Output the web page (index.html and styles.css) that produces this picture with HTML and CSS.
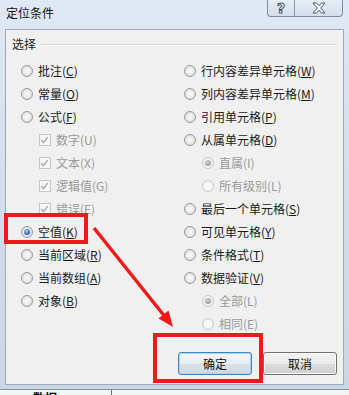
FILE: index.html
```html
<!DOCTYPE html>
<html lang="zh">
<head>
    <meta charset="UTF-8">
    <meta name="viewport" content="width=device-width, initial-scale=1.0">
    <title>定位条件</title>
    <link rel="stylesheet" href="styles.css">
</head>
<body>
    <div class="title-bar">
        <span class="title">定位条件</span>
        <div class="title-buttons">
            <span class="tb-help">?</span>
            <span class="tb-close">
                <svg width="14" height="12" viewBox="0 0 14 12">
                    <polygon points="1,1 4.5,1 7,3.8 9.5,1 13,1 8.8,6 13,11 9.5,11 7,8.2 4.5,11 1,11 5.2,6" fill="#fff" stroke="#4b5769" stroke-width="1"/>
                </svg>
            </span>
        </div>
    </div>

    <div class="client">
        <div class="group-head">
            <span>选择</span>
            <i class="group-line"></i>
        </div>

        <div class="options">
            <div class="col col-left">
                <div class="opt"><span class="radio"></span>批注(<u>C</u>)</div>
                <div class="opt"><span class="radio"></span>常量(<u>O</u>)</div>
                <div class="opt"><span class="radio"></span>公式(<u>F</u>)</div>
                <div class="opt sub off"><span class="check"><svg width="12" height="12" viewBox="0 0 12 12"><polyline points="2.5,6.2 5,8.8 9.5,2.8" fill="none" stroke="#a3a3a3" stroke-width="1.4"/></svg></span>数字(U)</div>
                <div class="opt sub off"><span class="check"><svg width="12" height="12" viewBox="0 0 12 12"><polyline points="2.5,6.2 5,8.8 9.5,2.8" fill="none" stroke="#a3a3a3" stroke-width="1.4"/></svg></span>文本(X)</div>
                <div class="opt sub off"><span class="check"><svg width="12" height="12" viewBox="0 0 12 12"><polyline points="2.5,6.2 5,8.8 9.5,2.8" fill="none" stroke="#a3a3a3" stroke-width="1.4"/></svg></span>逻辑值(G)</div>
                <div class="opt sub off"><span class="check"><svg width="12" height="12" viewBox="0 0 12 12"><polyline points="2.5,6.2 5,8.8 9.5,2.8" fill="none" stroke="#a3a3a3" stroke-width="1.4"/></svg></span>错误(E)</div>
                <div class="opt"><span class="radio on"></span>空值(<u>K</u>)</div>
                <div class="opt"><span class="radio"></span>当前区域(<u>R</u>)</div>
                <div class="opt"><span class="radio"></span>当前数组(<u>A</u>)</div>
                <div class="opt"><span class="radio"></span>对象(<u>B</u>)</div>
            </div>
            <div class="col col-right">
                <div class="opt"><span class="radio"></span>行内容差异单元格(<u>W</u>)</div>
                <div class="opt"><span class="radio"></span>列内容差异单元格(<u>M</u>)</div>
                <div class="opt"><span class="radio"></span>引用单元格(<u>P</u>)</div>
                <div class="opt"><span class="radio"></span>从属单元格(<u>D</u>)</div>
                <div class="opt sub off"><span class="radio on"></span>直属(I)</div>
                <div class="opt sub off"><span class="radio"></span>所有级别(L)</div>
                <div class="opt"><span class="radio"></span>最后一个单元格(<u>S</u>)</div>
                <div class="opt"><span class="radio"></span>可见单元格(<u>Y</u>)</div>
                <div class="opt"><span class="radio"></span>条件格式(<u>T</u>)</div>
                <div class="opt"><span class="radio"></span>数据验证(<u>V</u>)</div>
                <div class="opt sub off"><span class="radio on"></span>全部(L)</div>
                <div class="opt sub off"><span class="radio"></span>相同(E)</div>
            </div>
        </div>

        <div class="buttons">
            <button class="btn btn-default">确定</button>
            <button class="btn">取消</button>
        </div>
    </div>

    <div class="sheet">
        <span class="sheet-cell">数据</span>
    </div>

    <!-- 红色标注 -->
    <div class="mark mark-blank"></div>
    <div class="mark mark-ok"></div>
    <svg class="arrow" width="349" height="395" viewBox="0 0 349 395">
        <line x1="94" y1="228" x2="166" y2="318" stroke="#f01818" stroke-width="3.5"/>
        <polygon points="173,327 168.5,310.5 158.5,318.5" fill="#f01818"/>
    </svg>
</body>
</html>
```

FILE: styles.css
```css
* {
    margin: 0;
    padding: 0;
    box-sizing: border-box;
}
body {
    width: 349px;
    height: 395px;
    position: relative;
    overflow: hidden;
    font-family: "Noto Sans CJK SC", "Liberation Sans", sans-serif;
    font-size: 12px;
    color: #1a1a1a;
    background: linear-gradient(#dfe8f3, #cfdcec 60%, #c9d6e6);
}
/* 标题栏 */
.title-bar {
    height: 29px;
    display: flex;
    justify-content: space-between;
    align-items: flex-start;
}
.title {
    padding: 5px 0 0 6px;
    line-height: 16px;
    color: #111;
}
.title-buttons {
    display: flex;
    margin-right: 6px;
    height: 17px;
    border: 1px solid #7d8ba0;
    border-top: none;
    border-radius: 0 0 4px 4px;
    background: linear-gradient(#e6edf6, #d3deec);
    overflow: hidden;
}
.tb-help {
    width: 27px;
    border-right: 1px solid #8896aa;
    text-align: center;
    font-family: "DejaVu Sans", sans-serif;
    font-size: 14px;
    font-weight: bold;
    line-height: 16px;
    color: #fff;
    -webkit-text-stroke: 1px #4b5769;
}
.tb-close {
    width: 47px;
    display: flex;
    align-items: center;
    justify-content: center;
}
/* 窗口内容 */
.client {
    margin: 0 5px;
    height: 356px;
    background: #f0f0f0;
    border: 1px solid #a0a8b2;
    padding: 6px 6px 0 6px;
}
.group-head {
    display: flex;
    align-items: center;
    height: 16px;
    line-height: 16px;
    gap: 5px;
}
.group-line {
    flex: 1;
    height: 2px;
    border-top: 1px solid #d5d9de;
    border-bottom: 1px solid #ffffff;
    margin-top: 2px;
}
.options {
    display: flex;
    margin-top: 7px;
    padding-left: 9px;
}
.col-left {
    width: 163px;
}
.opt {
    height: 23px;
    display: flex;
    align-items: center;
    white-space: nowrap;
}
.opt u {
    text-decoration: underline;
    text-underline-offset: 1px;
}
.opt.sub {
    padding-left: 18px;
}
.opt.off {
    color: #9a9a9a;
}
.radio {
    width: 12px;
    height: 12px;
    margin-right: 5px;
    border: 1px solid #9b9b9b;
    border-radius: 50%;
    background: radial-gradient(circle, #fbfbfb 0, #ececec 45%, #cfcfcf 100%);
    position: relative;
    flex-shrink: 0;
}
.radio.on::after {
    content: "";
    position: absolute;
    left: 2px;
    top: 2px;
    width: 6px;
    height: 6px;
    border-radius: 50%;
    background: radial-gradient(circle at 40% 35%, #9cd0f4, #2a6aa8 65%, #163f6b);
}
.off .radio {
    border-color: #c9c9c9;
    background: radial-gradient(circle, #fcfcfc 0, #f2f2f2 60%, #e3e3e3 100%);
}
.off .radio.on::after {
    background: radial-gradient(circle at 40% 35%, #d2d2d2, #9c9c9c 70%);
}
.check {
    width: 12px;
    height: 12px;
    margin-right: 5px;
    border: 1px solid #c6c6c6;
    background: #f6f6f6;
    display: flex;
    flex-shrink: 0;
}
.check svg {
    margin: -1px 0 0 -1px;
}
/* 按钮 */
.buttons {
    display: flex;
    justify-content: flex-end;
    gap: 11px;
    margin-top: 17px;
}
.btn {
    width: 74px;
    height: 23px;
    font-family: "Noto Sans CJK SC", "Liberation Sans", sans-serif;
    font-size: 12px;
    color: #111;
    border: 1px solid #707070;
    border-radius: 3px;
    background: linear-gradient(#f3f3f3 0%, #ebebeb 50%, #dddddd 50%, #d0d0d0 100%);
    box-shadow: inset 0 0 0 1px #fbfbfb;
}
.btn-default {
    border-color: #3d86c0;
    box-shadow: inset 0 0 0 1px #a6d8f5;
    background: linear-gradient(#f2f6f9 0%, #e9eef2 50%, #dbe2e8 50%, #ced8e0 100%);
}
/* 窗口下方表格 */
.sheet {
    margin-top: 4px;
    height: 6px;
    background: #f4f4f4;
    border-top: 1px solid #8a8f96;
    overflow: hidden;
    display: flex;
}
.sheet-cell {
    width: 112px;
    padding-left: 33px;
    line-height: 16px;
    border-right: 1px solid #6e6e6e;
    font-weight: bold;
    color: #000;
}
/* 红色标注 */
.mark {
    position: absolute;
    border: 4px solid #f01818;
}
.mark-blank {
    left: 4px;
    top: 213px;
    width: 84px;
    height: 31px;
}
.mark-ok {
    left: 153px;
    top: 333px;
    width: 110px;
    height: 50px;
}
.arrow {
    position: absolute;
    left: 0;
    top: 0;
}
```
